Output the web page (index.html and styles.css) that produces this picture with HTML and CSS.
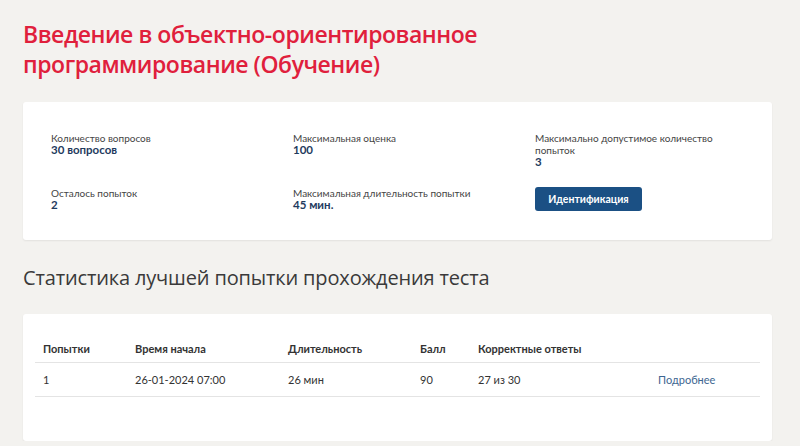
FILE: index.html
```html
<!DOCTYPE html>
<html lang="ru">
<head>
    <meta charset="UTF-8">
    <title>Введение в объектно-ориентированное программирование</title>
    <link rel="stylesheet" href="styles.css">
</head>
<body>
    <div class="page">
        <h1 class="test-title">Введение в объектно-ориентированное<br>программирование (Обучение)</h1>

        <!-- Test info -->
        <div class="card info-card">
            <div class="info-grid">
                <div class="info-item">
                    <div class="info-label">Количество вопросов</div>
                    <div class="info-value">30 вопросов</div>
                </div>
                <div class="info-item">
                    <div class="info-label">Максимальная оценка</div>
                    <div class="info-value">100</div>
                </div>
                <div class="info-item narrow">
                    <div class="info-label">Максимально допустимое количество попыток</div>
                    <div class="info-value">3</div>
                </div>
                <div class="info-item">
                    <div class="info-label">Осталось попыток</div>
                    <div class="info-value">2</div>
                </div>
                <div class="info-item">
                    <div class="info-label">Максимальная длительность попытки</div>
                    <div class="info-value">45 мин.</div>
                </div>
                <div class="info-item">
                    <button class="ident-btn">Идентификация</button>
                </div>
            </div>
        </div>

        <h2 class="section-title">Статистика лучшей попытки прохождения теста</h2>

        <!-- Best attempt -->
        <div class="card stats-card">
            <table class="stats-table">
                <colgroup>
                    <col class="col-attempt">
                    <col class="col-start">
                    <col class="col-duration">
                    <col class="col-score">
                    <col class="col-correct">
                    <col>
                </colgroup>
                <thead>
                    <tr>
                        <th>Попытки</th>
                        <th>Время начала</th>
                        <th>Длительность</th>
                        <th>Балл</th>
                        <th>Корректные ответы</th>
                        <th></th>
                    </tr>
                </thead>
                <tbody>
                    <tr>
                        <td>1</td>
                        <td>26-01-2024 07:00</td>
                        <td>26 мин</td>
                        <td>90</td>
                        <td>27 из 30</td>
                        <td><a href="#" class="more-link">Подробнее</a></td>
                    </tr>
                </tbody>
            </table>
        </div>
    </div>
</body>
</html>
```

FILE: styles.css
```css
* {
    box-sizing: border-box;
}

body {
    margin: 0;
    background-color: #f3f2ef;
    font-family: 'Open Sans', 'Noto Sans', sans-serif;
    color: #333;
}

.page {
    padding: 19px 28px 0 23px;
}

/* Title */
.test-title {
    margin: 0;
    font-size: 23px;
    line-height: 30px;
    font-weight: 600;
    letter-spacing: -0.45px;
    color: #e0203c;
}

/* Cards */
.card {
    background-color: #ffffff;
    border-radius: 3px;
    box-shadow: 0 1px 2px rgba(0, 0, 0, 0.07);
    font-family: 'Lato', 'Open Sans', sans-serif;
}

.info-card {
    margin-top: 23px;
    padding: 30px 20px 29px 28px;
}

.info-grid {
    display: grid;
    grid-template-columns: 242px 242px 1fr;
    row-gap: 19px;
}

.info-label {
    font-size: 10px;
    line-height: 12px;
    color: #444;
}

.narrow .info-label {
    max-width: 200px;
}

.info-value {
    font-size: 11.5px;
    line-height: 12px;
    font-weight: 700;
    color: #1f3b5e;
}

.ident-btn {
    width: 107px;
    height: 24px;
    padding: 0;
    border: none;
    border-radius: 3px;
    background-color: #1b5084;
    color: #fff;
    font-family: inherit;
    font-size: 10.5px;
    font-weight: 700;
    cursor: pointer;
}

/* Section */
.section-title {
    margin: 24px 0 22px;
    font-size: 20px;
    line-height: 28px;
    font-weight: 400;
    letter-spacing: -0.15px;
    color: #3a3a3a;
}

.stats-card {
    padding: 22px 12px 44px;
}

.stats-table {
    width: 100%;
    border-collapse: collapse;
    table-layout: fixed;
    font-size: 11px;
}

.col-attempt { width: 92px; }
.col-start { width: 153px; }
.col-duration { width: 132px; }
.col-score { width: 58px; }
.col-correct { width: 180px; }

.stats-table th {
    height: 26px;
    padding: 0 8px;
    text-align: left;
    font-weight: 700;
    color: #333;
    border-bottom: 1px solid #e4e4e4;
}

.stats-table td {
    height: 34px;
    padding: 0 8px;
    color: #333;
    border-bottom: 1px solid #e4e4e4;
}

.more-link {
    color: #3d6691;
    text-decoration: none;
}
```
